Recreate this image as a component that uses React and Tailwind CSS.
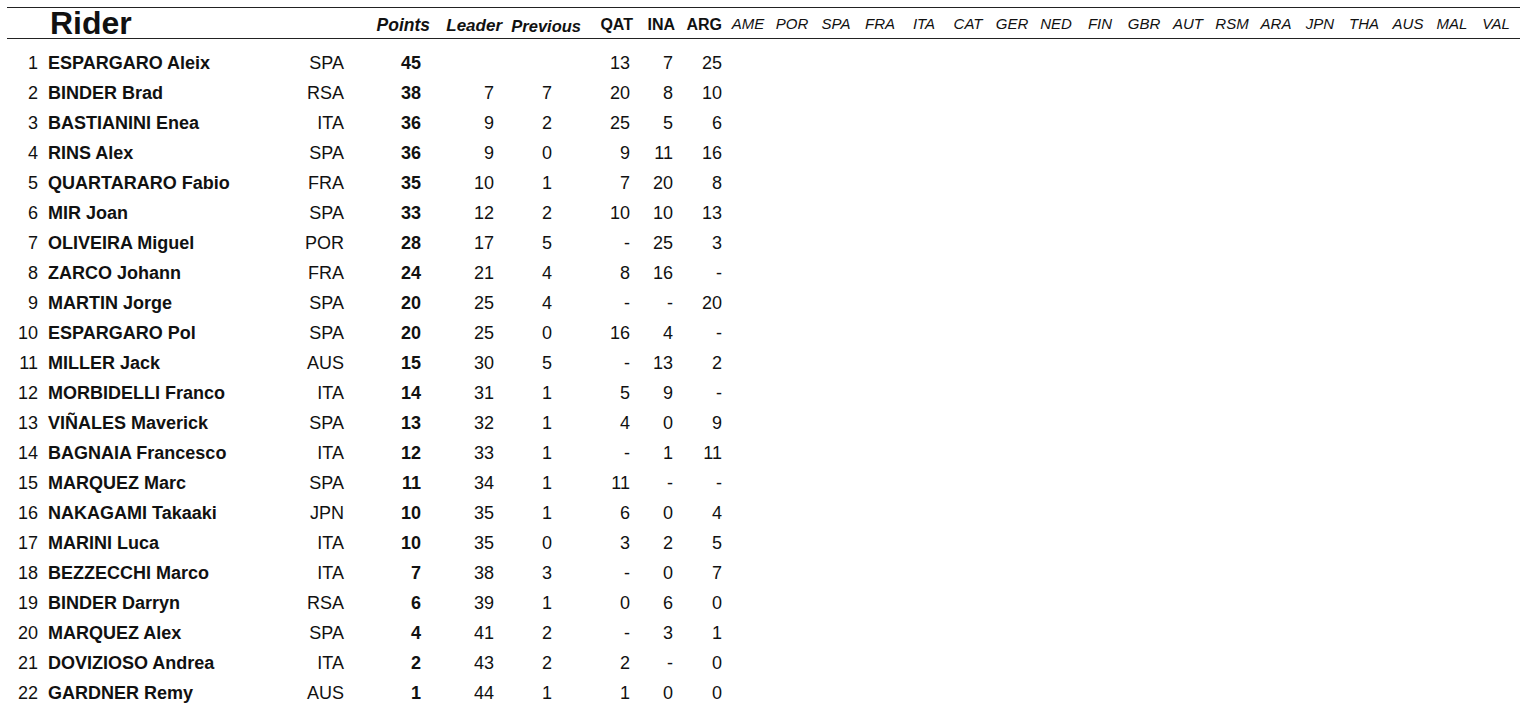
const riders = [
  [1, 'ESPARGARO Aleix', 'SPA', 45, '', '', '13', '7', '25'],
  [2, 'BINDER Brad', 'RSA', 38, '7', '7', '20', '8', '10'],
  [3, 'BASTIANINI Enea', 'ITA', 36, '9', '2', '25', '5', '6'],
  [4, 'RINS Alex', 'SPA', 36, '9', '0', '9', '11', '16'],
  [5, 'QUARTARARO Fabio', 'FRA', 35, '10', '1', '7', '20', '8'],
  [6, 'MIR Joan', 'SPA', 33, '12', '2', '10', '10', '13'],
  [7, 'OLIVEIRA Miguel', 'POR', 28, '17', '5', '-', '25', '3'],
  [8, 'ZARCO Johann', 'FRA', 24, '21', '4', '8', '16', '-'],
  [9, 'MARTIN Jorge', 'SPA', 20, '25', '4', '-', '-', '20'],
  [10, 'ESPARGARO Pol', 'SPA', 20, '25', '0', '16', '4', '-'],
  [11, 'MILLER Jack', 'AUS', 15, '30', '5', '-', '13', '2'],
  [12, 'MORBIDELLI Franco', 'ITA', 14, '31', '1', '5', '9', '-'],
  [13, 'VIÑALES Maverick', 'SPA', 13, '32', '1', '4', '0', '9'],
  [14, 'BAGNAIA Francesco', 'ITA', 12, '33', '1', '-', '1', '11'],
  [15, 'MARQUEZ Marc', 'SPA', 11, '34', '1', '11', '-', '-'],
  [16, 'NAKAGAMI Takaaki', 'JPN', 10, '35', '1', '6', '0', '4'],
  [17, 'MARINI Luca', 'ITA', 10, '35', '0', '3', '2', '5'],
  [18, 'BEZZECCHI Marco', 'ITA', 7, '38', '3', '-', '0', '7'],
  [19, 'BINDER Darryn', 'RSA', 6, '39', '1', '0', '6', '0'],
  [20, 'MARQUEZ Alex', 'SPA', 4, '41', '2', '-', '3', '1'],
  [21, 'DOVIZIOSO Andrea', 'ITA', 2, '43', '2', '2', '-', '0'],
  [22, 'GARDNER Remy', 'AUS', 1, '44', '1', '1', '0', '0'],
];

// races still to come, shown in light italic
const upcoming = ['AME', 'POR', 'SPA', 'FRA', 'ITA', 'CAT', 'GER', 'NED', 'FIN', 'GBR', 'AUT', 'RSM', 'ARA', 'JPN', 'THA', 'AUS', 'MAL', 'VAL'];

export default function App() {
  return (
    <div className="w-[1531px] h-[724px] bg-white text-[#111] font-['Liberation_Sans',Arial,sans-serif] pt-[7px]">
      <div className="ml-[7px] w-[1513px] h-px bg-[#222]" />

      {/* Header */}
      <div className="ml-[7px] w-[1513px] h-[30px] flex items-end leading-none">
        <div className="w-[363px] pl-[43px] font-bold text-[32px] leading-[30px]">Rider</div>
        <div className="w-[60px] text-right pb-[4px] font-bold italic text-[17.5px]">Points</div>
        <div className="w-[72px] text-right pb-[4px] font-bold italic text-[17px]">Leader</div>
        <div className="w-[79px] text-right pb-[4px] font-bold italic text-[16.5px]">Previous</div>
        <div className="w-[52px] text-right pb-[5px] font-bold text-[16px]">QAT</div>
        <div className="w-[42px] text-right pb-[5px] font-bold text-[16px]">INA</div>
        <div className="w-[47px] text-right pb-[5px] font-bold text-[16px]">ARG</div>
        <div className="w-[4px]" />
        {upcoming.map((race, i) => (
          <div key={i} className="w-[44px] flex justify-center pb-[7px] italic text-[15px] whitespace-nowrap">
            {race}
          </div>
        ))}
      </div>

      <div className="ml-[7px] w-[1513px] h-px bg-[#222]" />

      {/* Standings */}
      <div className="mt-[9px] ml-[8px] text-[18px] leading-[30px]">
        {riders.map((r) => (
          <div key={r[0]} className="flex h-[30px] whitespace-nowrap">
            <div className="w-[30px] text-right">{r[0]}</div>
            <div className="w-[262px] pl-[10px] font-bold">{r[1]}</div>
            <div className="w-[44px] text-right">{r[2]}</div>
            <div className="w-[77px] text-right font-bold">{r[3]}</div>
            <div className="w-[73px] text-right">{r[4]}</div>
            <div className="w-[58px] text-right">{r[5]}</div>
            <div className="w-[78px] text-right">{r[6]}</div>
            <div className="w-[43px] text-right">{r[7]}</div>
            <div className="w-[49px] text-right">{r[8]}</div>
          </div>
        ))}
      </div>
    </div>
  );
}
